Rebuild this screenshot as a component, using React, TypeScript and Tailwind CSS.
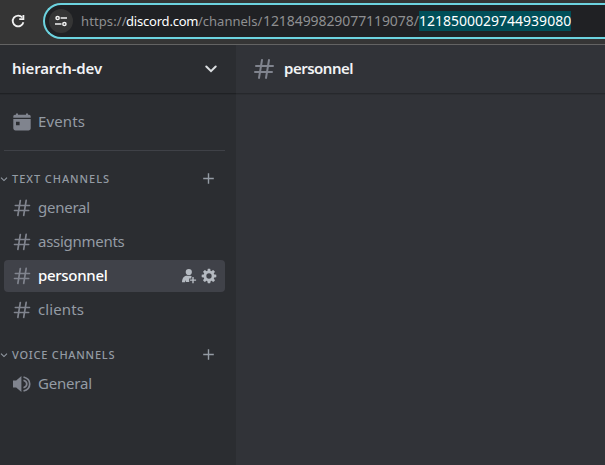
import React from "react";

function Hash({ size }: { size: number }) {
  return (
    <svg width={size} height={size} viewBox="0 0 24 24" fill="#80848e" className="shrink-0">
      <path
        fillRule="evenodd"
        d="M10.99 3.16A1 1 0 1 0 9 2.84L8.15 8H4a1 1 0 0 0 0 2h3.82l-.67 4H3a1 1 0 1 0 0 2h3.82l-.8 4.84a1 1 0 0 0 1.97.32L8.85 16h4.97l-.8 4.84a1 1 0 0 0 1.97.32l.86-5.16H20a1 1 0 1 0 0-2h-3.82l.67-4H21a1 1 0 1 0 0-2h-3.82l.8-4.84a1 1 0 1 0-1.97-.32L15.15 8h-4.97l.8-4.84ZM14.15 14l.67-4H9.85l-.67 4h4.97Z"
      />
    </svg>
  );
}

function Plus() {
  return (
    <svg width="11" height="11" viewBox="0 0 11 11" fill="#949ba4">
      <path d="M4.8 .2h1.4v4.6h4.6v1.4H6.2v4.6H4.8V6.2H.2V4.8h4.6z" />
    </svg>
  );
}

function Section({ label, tracking }: { label: string; tracking: string }) {
  return (
    <div className="flex h-[15px] items-center">
      <svg width="9" height="8" viewBox="0 0 9 8" fill="none" stroke="#949ba4" strokeWidth="1.1" className="shrink-0">
        <path d="M1 2.7 4 5.6 7 2.7" />
      </svg>
      <span className={"ml-[3px] text-[11px] font-medium leading-[15px] text-[#949ba4] " + tracking}>{label}</span>
      <div className="ml-auto mr-[22px]">
        <Plus />
      </div>
    </div>
  );
}

function Channel({ name, tracking, active = false }: { name: string; tracking: string; active?: boolean }) {
  return (
    <div className={"ml-1 mr-[11px] flex h-8 items-center rounded-[4px] pl-2 pr-2 " + (active ? "bg-[#404249]" : "")}>
      <Hash size={20} />
      <span className={"ml-[6px] pb-0.5 text-[15px] leading-5 " + tracking + (active ? " font-medium text-white" : " text-[#949ba4]")}>{name}</span>
      {active && (
        <div className="ml-auto flex items-center gap-1">
          <svg width="16" height="16" viewBox="0 0 16 16" fill="#b5bac1">
            <circle cx="7.8" cy="4" r="3.1" />
            <path d="M1 14.3c0-4 1.9-6.6 5-6.6h3c1 0 1.7.3 2.2.8h-.9v2.1H8.2v3.4H5l-.5-2-.5 2.3z" />
            <path d="M11.3 9h1.4v2.4h2.4v1.4h-2.4v2.4h-1.4v-2.4H9v-1.4h2.3z" />
          </svg>
          <svg width="16" height="16" viewBox="0 0 24 24" fill="#b5bac1">
            <path
              fillRule="evenodd"
              d="M10.56 1.1c-.46.05-.7.53-.64.98.18 1.16-.19 2.2-.98 2.53-.8.33-1.79-.15-2.49-1.1-.27-.36-.78-.52-1.14-.24-.77.59-1.45 1.27-2.04 2.04-.28.36-.12.87.24 1.14.96.7 1.43 1.7 1.1 2.49-.33.8-1.37 1.16-2.53.98-.45-.07-.93.18-.99.64a11.1 11.1 0 0 0 0 2.88c.06.46.54.7.99.64 1.16-.18 2.2.19 2.53.98.33.8-.14 1.79-1.1 2.49-.36.27-.52.78-.24 1.14.59.77 1.27 1.45 2.04 2.04.36.28.87.12 1.14-.24.7-.95 1.7-1.43 2.49-1.1.8.33 1.16 1.37.98 2.53-.07.45.18.93.64.99a11.1 11.1 0 0 0 2.88 0c.46-.06.7-.54.64-.99-.18-1.16.19-2.2.98-2.53.8-.33 1.79.14 2.49 1.1.27.36.78.52 1.14.24.77-.59 1.45-1.27 2.04-2.04.28-.36.12-.87-.24-1.14-.96-.7-1.43-1.7-1.1-2.49.33-.8 1.37-1.16 2.53-.98.45.07.93-.18.99-.64a11.1 11.1 0 0 0 0-2.88c-.06-.46-.54-.7-.99-.64-1.16.18-2.2-.19-2.53-.98-.33-.8.14-1.79 1.1-2.49.36-.27.52-.78.24-1.14a11.07 11.07 0 0 0-2.04-2.04c-.36-.28-.87-.12-1.14.24-.7.96-1.7 1.43-2.49 1.1-.8-.33-1.16-1.37-.98-2.53.07-.45-.18-.93-.64-.99a11.1 11.1 0 0 0-2.88 0ZM16 12a4 4 0 1 1-8 0 4 4 0 0 1 8 0Z"
            />
          </svg>
        </div>
      )}
    </div>
  );
}

function AddressBar() {
  return (
    <div className="flex h-[45px] items-start overflow-hidden border-b border-[#636363] bg-[#353535] pt-[3px]">
      <svg width="16" height="16" viewBox="0 0 16 16" className="ml-[10px] mt-[10px] shrink-0" fill="none" stroke="#f1f1f1" strokeWidth="1.8">
        <path d="M13.4 9.2A5.4 5.4 0 1 1 12.3 4.5" />
        <path d="M13.4 2v4.1H9.2" />
      </svg>
      <div className="ml-[17px] flex h-9 w-[620px] shrink-0 items-center rounded-l-full border-2 border-r-0 border-[#6cd3df] bg-[#202124] pl-1">
        <div className="flex size-6 shrink-0 items-center justify-center rounded-full bg-[#353535]">
          <svg width="12" height="12" viewBox="0 0 12 12" fill="none" stroke="#f1f1f1" strokeWidth="1.5">
            <circle cx="2.6" cy="3" r="1.6" />
            <path d="M5.6 3H12M0 9h6.5" />
            <circle cx="9.4" cy="9" r="1.6" />
          </svg>
        </div>
        <div className="ml-2 flex whitespace-pre font-['Noto_Sans',sans-serif] text-sm leading-5 text-[#8e8f91]">
          <span className="w-[45px] text-[13px] tracking-[0.1px]">https://</span>
          <span className="w-[72px] text-[13px] tracking-[-0.2px] text-white">discord.com</span>
          <span className="w-[65px] text-[13px] tracking-[0px]">/channels/</span>
          <span className="w-[156px] tracking-[-0.08px]">1218499829077119078/</span>
          <span className="w-[152px] bg-[#004f59] text-white">1218500029744939080</span>
        </div>
      </div>
    </div>
  );
}

export default function App() {
  return (
    <div className="flex h-[465px] w-[605px] flex-col overflow-hidden bg-[#313338] font-['Noto_Sans',sans-serif]">
      <AddressBar />
      <div className="flex flex-1">
        <aside className="w-[236px] shrink-0 bg-[#2b2d31]">
          <header className="flex h-[49px] items-center border-b border-[#1f2124] pl-3 pr-[19px] shadow-[0_1px_0_rgba(0,0,0,0.08)]">
            <span className="pb-0.5 text-[15px] font-semibold leading-5 tracking-[-0.15px] text-[#f2f3f5]">hierarch-dev</span>
            <svg width="12" height="8" viewBox="0 0 12 8" className="ml-auto" fill="none" stroke="#dbdee1" strokeWidth="2" strokeLinecap="round">
              <path d="M1.3 1.5 6 6.2l4.7-4.7" />
            </svg>
          </header>
          <div className="mt-3 flex h-8 items-center pl-3">
            <svg width="20" height="20" viewBox="0 0 20 20" fill="#80848e">
              <path d="M1.3 5.8V4.5c0-1 .8-1.7 1.7-1.7h1V1.5h2v1.3h8V1.5h2v1.3h1c1 0 1.7.8 1.7 1.7v1.3z" />
              <path fillRule="evenodd" d="M1.3 7h17.4v9.3c0 1.3-1 2.2-2.2 2.2h-13c-1.2 0-2.2-1-2.2-2.2zM4 9.8v3.5h3.6V9.8z" />
            </svg>
            <span className="ml-[6px] pb-0.5 text-[15px] leading-5 tracking-[0.15px] text-[#949ba4]">Events</span>
          </div>
          <div className="ml-1 mr-[11px] mt-3 h-px bg-[#3f4147]" />
          <div className="mt-5">
            <Section label="TEXT CHANNELS" tracking="tracking-[0.95px]" />
          </div>
          <div className="mt-[6px] flex flex-col gap-[2px]">
            <Channel name="general" tracking="tracking-[-0.25px]" />
            <Channel name="assignments" tracking="tracking-[-0.28px]" />
            <Channel name="personnel" tracking="tracking-[-0.3px]" active />
            <Channel name="clients" tracking="tracking-[0.1px]" />
          </div>
          <div className="mt-[21px]">
            <Section label="VOICE CHANNELS" tracking="tracking-[0.75px]" />
          </div>
          <div className="mt-[6px] flex h-8 items-center pl-3">
            <svg width="20" height="20" viewBox="0 0 20 20" fill="#80848e">
              <path d="M1 6.5h3.2L9.4 2v16l-5.2-4.5H1z" />
              <path d="M11.5 6.2c2.3.8 3.3 2.1 3.3 3.8s-1 3-3.3 3.8M11.5 3c4 1 6.2 3.5 6.2 7s-2.2 6-6.2 7" fill="none" stroke="#80848e" strokeWidth="1.7" />
            </svg>
            <span className="ml-[6px] pb-0.5 text-[15px] leading-5 tracking-[-0.2px] text-[#949ba4]">General</span>
          </div>
        </aside>
        <main className="flex-1">
          <header className="flex h-[49px] items-center border-b border-[#26282c] pl-4 shadow-[0_1px_0_rgba(0,0,0,0.08)]">
            <Hash size={24} />
            <h1 className="ml-2 pb-0.5 text-[15px] font-semibold leading-5 tracking-[-0.5px] text-[#f2f3f5]">personnel</h1>
          </header>
        </main>
      </div>
    </div>
  );
}
